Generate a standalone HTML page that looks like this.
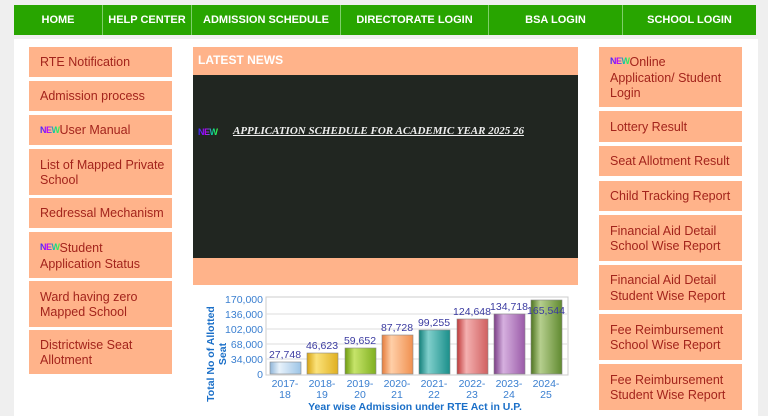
<!DOCTYPE html>
<html><head><meta charset="utf-8"><style>
*{margin:0;padding:0;box-sizing:border-box}
body{width:768px;height:416px;overflow:hidden;background:#efefef;font-family:"Liberation Sans",Arial,sans-serif;position:relative}
.nav{position:absolute;left:14px;top:5px;width:742px;height:30px;background:#28a500;display:flex}
.nav div{color:#fff;font-weight:bold;font-size:11px;display:flex;align-items:center;justify-content:center;border-right:1px solid #7fcf6a;height:100%}
.nav div:last-child{border-right:none}
.main{position:absolute;left:14px;top:39px;width:744px;height:377px;background:#fff}
.b{position:absolute;background:#ffb38a;color:#a3241c;font-size:12.5px;line-height:15.5px;padding-left:11px;padding-top:2px;display:flex;align-items:center}
.l{left:29px;width:143px}.r{left:599px;width:143px}
.nw{font-weight:bold;font-size:9px;letter-spacing:-0.5px;background:linear-gradient(90deg,#3030ff,#c000ff 40%,#00d0a0 70%,#40ff40);-webkit-background-clip:text;color:transparent;vertical-align:2px}
</style></head><body>
<div class="nav">
<div style="width:89px">HOME</div>
<div style="width:89px">HELP CENTER</div>
<div style="width:149px">ADMISSION SCHEDULE</div>
<div style="width:148px">DIRECTORATE LOGIN</div>
<div style="width:134px">BSA LOGIN</div>
<div style="width:133px">SCHOOL LOGIN</div>
</div>
<div class="main"></div>

<div class="b l" style="top:47px;height:30px">RTE Notification</div>
<div class="b l" style="top:81px;height:30px">Admission process</div>
<div class="b l" style="top:115px;height:30px"><span class="nw">NEW</span>User Manual</div>
<div class="b l" style="top:149px;height:46px">List of Mapped Private School</div>
<div class="b l" style="top:198px;height:30px">Redressal Mechanism</div>
<div class="b l" style="top:232px;height:46px"><div><span class="nw">NEW</span>Student<br>Application Status</div></div>
<div class="b l" style="top:281px;height:46px">Ward having zero Mapped School</div>
<div class="b l" style="top:330px;height:44px">Districtwise Seat Allotment</div>

<div class="b r" style="top:47px;height:60px"><div><span class="nw">NEW</span>Online<br>Application/ Student<br>Login</div></div>
<div class="b r" style="top:111px;height:31px">Lottery Result</div>
<div class="b r" style="top:146px;height:30px">Seat Allotment Result</div>
<div class="b r" style="top:181px;height:30px">Child Tracking Report</div>
<div class="b r" style="top:215px;height:46px">Financial Aid Detail School Wise Report</div>
<div class="b r" style="top:265px;height:45px">Financial Aid Detail Student Wise Report</div>
<div class="b r" style="top:314px;height:46px">Fee Reimbursement School Wise Report</div>
<div class="b r" style="top:364px;height:46px">Fee Reimbursement Student Wise Report</div>

<div style="position:absolute;left:193px;top:47px;width:385px;height:28px;background:#ffb38a;color:#fff;font-weight:bold;font-size:12px;padding:6px 0 0 5px">LATEST NEWS</div>
<div style="position:absolute;left:193px;top:75px;width:385px;height:183px;background:#212621"></div>
<div style="position:absolute;left:193px;top:258px;width:385px;height:27px;background:#ffb38a"></div>
<div style="position:absolute;left:198px;top:127px;font-size:9px" class="nw">NEW</div>
<div style="position:absolute;left:233px;top:125px;color:#eee;font-family:'Liberation Serif',serif;font-weight:bold;font-style:italic;font-size:11px;text-decoration:underline">APPLICATION SCHEDULE FOR ACADEMIC YEAR 2025 26</div>

<svg style="position:absolute;left:0;top:0" width="768" height="416" font-family="Liberation Sans,Arial,sans-serif">
<defs>
<linearGradient id="g1"><stop offset="0" stop-color="#8fb5d8"/><stop offset=".3" stop-color="#e8f2fb"/><stop offset="1" stop-color="#9cc4e6"/></linearGradient>
<linearGradient id="g2"><stop offset="0" stop-color="#d7a312"/><stop offset=".3" stop-color="#fbe27a"/><stop offset="1" stop-color="#e0b020"/></linearGradient>
<linearGradient id="g3"><stop offset="0" stop-color="#6e9c10"/><stop offset=".3" stop-color="#c6e46a"/><stop offset="1" stop-color="#80b020"/></linearGradient>
<linearGradient id="g4"><stop offset="0" stop-color="#e57c3c"/><stop offset=".3" stop-color="#ffcfa8"/><stop offset="1" stop-color="#f09050"/></linearGradient>
<linearGradient id="g5"><stop offset="0" stop-color="#127f7a"/><stop offset=".3" stop-color="#80cfcc"/><stop offset="1" stop-color="#1a8f8a"/></linearGradient>
<linearGradient id="g6"><stop offset="0" stop-color="#c03a3a"/><stop offset=".3" stop-color="#f4b0b0"/><stop offset="1" stop-color="#d06060"/></linearGradient>
<linearGradient id="g7"><stop offset="0" stop-color="#7a3d86"/><stop offset=".3" stop-color="#d6b0df"/><stop offset="1" stop-color="#9a5aa8"/></linearGradient>
<linearGradient id="g8"><stop offset="0" stop-color="#4e7420"/><stop offset=".3" stop-color="#b6cf8e"/><stop offset="1" stop-color="#608a30"/></linearGradient>
</defs>
<rect x="266" y="297" width="302" height="78" fill="#fff" stroke="#ccc"/>
<g stroke="#ddd"><line x1="266" y1="314" x2="567" y2="314"/><line x1="266" y1="329" x2="567" y2="329"/><line x1="266" y1="344" x2="567" y2="344"/><line x1="266" y1="359" x2="567" y2="359"/></g>
<g font-size="10.5" fill="#3a7fd0" text-anchor="end">
<text x="263" y="303">170,000</text><text x="263" y="318">136,000</text><text x="263" y="333">102,000</text><text x="263" y="348">68,000</text><text x="263" y="363">34,000</text><text x="263" y="378">0</text></g>
<g stroke="#888" stroke-width=".6">
<rect x="270" y="362" width="31" height="12" fill="url(#g1)"/>
<rect x="307" y="353" width="31" height="21" fill="url(#g2)"/>
<rect x="345" y="348" width="31" height="26" fill="url(#g3)"/>
<rect x="382" y="335" width="31" height="39" fill="url(#g4)"/>
<rect x="419" y="330" width="31" height="44" fill="url(#g5)"/>
<rect x="457" y="319" width="31" height="55" fill="url(#g6)"/>
<rect x="494" y="314" width="31" height="60" fill="url(#g7)"/>
<rect x="531" y="300" width="31" height="74" fill="url(#g8)"/></g>
<g font-size="10.5" fill="#3a3aa0" text-anchor="middle">
<text x="285" y="358">27,748</text><text x="322" y="349">46,623</text><text x="360" y="344">59,652</text><text x="397" y="331">87,728</text><text x="434" y="326">99,255</text><text x="472" y="315">124,648</text><text x="509" y="310">134,718</text><text x="546" y="314">165,544</text></g>
<g font-size="10.5" fill="#3a7fd0" text-anchor="middle">
<text x="285" y="387">2017-</text><text x="285" y="398">18</text>
<text x="322" y="387">2018-</text><text x="322" y="398">19</text>
<text x="360" y="387">2019-</text><text x="360" y="398">20</text>
<text x="397" y="387">2020-</text><text x="397" y="398">21</text>
<text x="434" y="387">2021-</text><text x="434" y="398">22</text>
<text x="472" y="387">2022-</text><text x="472" y="398">23</text>
<text x="509" y="387">2023-</text><text x="509" y="398">24</text>
<text x="546" y="387">2024-</text><text x="546" y="398">25</text></g>
<text x="415" y="410" font-size="10.5" font-weight="bold" fill="#1a6fc8" text-anchor="middle">Year wise Admission under RTE Act in U.P.</text>
<text transform="translate(214,354) rotate(-90)" font-size="10.5" font-weight="bold" fill="#1a6fc8" text-anchor="middle">Total No of Allotted</text>
<text transform="translate(226,354) rotate(-90)" font-size="10.5" font-weight="bold" fill="#1a6fc8" text-anchor="middle">Seat</text>
</svg>
</body></html>
